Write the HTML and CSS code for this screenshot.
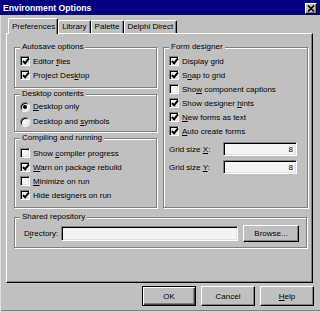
FILE: index.html
```html
<!DOCTYPE html>
<html>
    <head>
        <title> Environment Options </title>
        <link rel="stylesheet" href="styles.css">
    </head>

    <body>
        <div class="window">

            <!-- Title bar -->
            <div class="titleBar">
                <span class="titleText">Environment Options</span>
                <button class="closeButton">
                    <svg width="8" height="7" viewBox="0 0 8 7">
                        <path d="M1 0.5 L7 6.5 M7 0.5 L1 6.5" stroke="#000" stroke-width="1.6"/>
                    </svg>
                </button>
            </div>

            <!-- Tabs -->
            <div class="tabs">
                <div class="tab activeTab">Preferences</div>
                <div class="tab">Library</div>
                <div class="tab">Palette</div>
                <div class="tab">Delphi Direct</div>
            </div>

            <div class="page">
                <div class="columns">
                    <div class="leftColumn">
                        <fieldset class="group">
                            <legend>Autosave options</legend>
                            <div class="option"><span class="checkBox checked"></span><span>Editor <u>f</u>iles</span></div>
                            <div class="option"><span class="checkBox checked"></span><span>Project Des<u>k</u>top</span></div>
                        </fieldset>

                        <fieldset class="group radioGroup">
                            <legend>Desktop contents</legend>
                            <div class="option radioOption"><span class="radio selected"></span><span><u>D</u>esktop only</span></div>
                            <div class="option radioOption"><span class="radio"></span><span>Desktop and <u>s</u>ymbols</span></div>
                        </fieldset>

                        <fieldset class="group compileGroup">
                            <legend>Compiling and running</legend>
                            <div class="option"><span class="checkBox"></span><span>Show <u>c</u>ompiler progress</span></div>
                            <div class="option"><span class="checkBox checked"></span><span><u>W</u>arn on package rebuild</span></div>
                            <div class="option"><span class="checkBox"></span><span><u>M</u>inimize on run</span></div>
                            <div class="option"><span class="checkBox checked"></span><span>Hide desi<u>g</u>ners on run</span></div>
                        </fieldset>
                    </div>

                    <fieldset class="group formGroup">
                        <legend>Form designer</legend>
                        <div class="option"><span class="checkBox checked"></span><span>Display <u>g</u>rid</span></div>
                        <div class="option"><span class="checkBox checked"></span><span>S<u>n</u>ap to grid</span></div>
                        <div class="option"><span class="checkBox"></span><span>Sho<u>w</u> component captions</span></div>
                        <div class="option"><span class="checkBox checked"></span><span>Show designer <u>h</u>ints</span></div>
                        <div class="option"><span class="checkBox checked"></span><span><u>N</u>ew forms as text</span></div>
                        <div class="option"><span class="checkBox checked"></span><span><u>A</u>uto create forms</span></div>

                        <div class="gridRow">
                            <span class="gridLabel">Grid size <u>X</u>:</span>
                            <input type="text" class="field gridField" value="8">
                        </div>
                        <div class="gridRow">
                            <span class="gridLabel">Grid size <u>Y</u>:</span>
                            <input type="text" class="field gridField" value="8">
                        </div>
                    </fieldset>
                </div>

                <fieldset class="group sharedGroup">
                    <legend>Shared repository</legend>
                    <div class="directoryRow">
                        <span class="directoryLabel">D<u>i</u>rectory:</span>
                        <input type="text" class="field directoryField">
                        <button class="button browseButton">Browse...</button>
                    </div>
                </fieldset>
            </div>

            <!-- Dialog buttons -->
            <div class="dialogButtons">
                <button class="button defaultButton">OK</button>
                <button class="button">Cancel</button>
                <button class="button"><u>H</u>elp</button>
            </div>

        </div>
    </body>
</html>
```

FILE: styles.css
```css
body{
    margin: 0;
    background-color: #c0c0c0;
    font-family: "Liberation Sans", Arial, sans-serif;
    font-size: 8px;
    color: black;
}

u{
    text-underline-offset: 1px;
}

.window{
    width: 320px;
    height: 313px;
    box-sizing: border-box;
    background-color: #c0c0c0;
    box-shadow: inset 1px 0 #dfdfdf, inset 0 -2px #d4d4d4, inset 0 -3px #808080;
    overflow: hidden;
}

/* Title bar */

.titleBar{
    height: 15px;
    background-color: #000080;
    display: flex;
    align-items: center;
    justify-content: space-between;
    padding: 0 3px;
}

.titleText{
    color: white;
    font-weight: bold;
    font-size: 8.7px;
}

.closeButton{
    width: 12px;
    height: 11px;
    padding: 0;
    margin-top: 1px;
    display: flex;
    align-items: center;
    justify-content: center;
    box-sizing: border-box;
    background: #c0c0c0;
    border: 1px solid;
    border-color: #fff #000 #000 #fff;
    box-shadow: inset -1px -1px #808080;
}

/* Tabs */

.tabs{
    display: flex;
    align-items: flex-end;
    height: 15px;
    margin: 3px 0 0 8px;
}

.tab{
    height: 13px;
    box-sizing: border-box;
    padding: 0 3px;
    line-height: 12px;
    background: #c0c0c0;
    border-top: 1px solid #fff;
    border-left: 1px solid #fff;
    border-right: 1px solid #000;
    border-radius: 2px 2px 0 0;
    box-shadow: inset -1px 0 #808080;
}

.activeTab{
    height: 16px;
    line-height: 15px;
    padding: 0 2px 0 3px;
    margin-bottom: -1px;
    position: relative;
    z-index: 1;
}

/* Page */

.page{
    height: 250px;
    box-sizing: border-box;
    margin: 0 7px 0 6px;
    padding: 8px 4px 0 7px;
    border: 1px solid;
    border-color: #fff #000 #000 #fff;
    box-shadow: inset -1px -1px #808080;
}

.columns{
    display: flex;
    gap: 6px;
}

.leftColumn{
    width: 143px;
    display: flex;
    flex-direction: column;
    gap: 1px;
}

.group{
    margin: 0;
    padding: 0 4px 5px 5px;
    min-width: 0;
    border: 1px solid #808080;
    box-shadow: inset 1px 1px #fff, 1px 1px #fff;
}

.group legend{
    padding: 0 2px;
    line-height: 10px;
    height: 10px;
    background: #c0c0c0;
}

.group > .option:first-of-type{
    margin-top: 2px;
}

.radioGroup{
    padding-bottom: 2px;
}

.radioGroup > .option:first-of-type{
    margin-top: 0;
}

.compileGroup{
    flex: 1;
}

.compileGroup > .option:first-of-type{
    margin-top: 3px;
}

.formGroup{
    flex: 1;
}

.sharedGroup{
    margin-top: 4px;
    margin-right: 1px;
}

/* Check boxes and radios */

.option{
    display: flex;
    align-items: center;
    height: 14px;
    white-space: nowrap;
}

.radioOption{
    height: 15px;
}

.checkBox,
.radio{
    width: 10px;
    height: 10px;
    flex: none;
    box-sizing: border-box;
    margin-right: 3px;
    background: #f4f4f4;
    border: 1px solid;
    border-color: #808080 #fff #fff #808080;
    box-shadow: inset 1px 1px #000, inset -1px -1px #dfdfdf;
    display: flex;
    align-items: center;
    justify-content: center;
}

.checked::after{
    content: "";
    width: 2px;
    height: 5px;
    margin: -2px 0 0 1px;
    border: solid #000;
    border-width: 0 2px 2px 0;
    transform: rotate(40deg);
}

.radio{
    border-radius: 50%;
}

.selected::after{
    content: "";
    width: 4px;
    height: 4px;
    border-radius: 50%;
    background: #000;
}

/* Text fields */

.field{
    box-sizing: border-box;
    margin: 0;
    height: 14px;
    padding: 0 3px;
    font: inherit;
    text-align: right;
    background: #f4f4f4;
    border: 1px solid;
    border-color: #808080 #fff #fff #808080;
    box-shadow: inset 1px 1px #000, inset -1px -1px #dfdfdf;
    outline: none;
}

.gridRow{
    display: flex;
    align-items: center;
    margin-top: 4px;
}

.gridLabel{
    width: 54px;
    flex: none;
}

.gridField{
    width: 74px;
}

.directoryRow{
    display: flex;
    align-items: center;
    height: 17px;
    margin-top: 3px;
    padding-left: 4px;
}

.directoryLabel{
    width: 37px;
    flex: none;
}

.directoryField{
    width: 177px;
    height: 15px;
}

/* Buttons */

.button{
    box-sizing: border-box;
    margin: 0;
    padding: 0;
    font: inherit;
    color: black;
    background: #c0c0c0;
    border: 1px solid;
    border-color: #fff #000 #000 #fff;
    box-shadow: inset -1px -1px #808080;
}

.browseButton{
    width: 56px;
    height: 17px;
    margin-left: 5px;
}

.dialogButtons{
    display: flex;
    justify-content: flex-end;
    gap: 5px;
    margin-top: 3px;
    padding-right: 6px;
}

.dialogButtons .button{
    width: 54px;
    height: 20px;
}

.defaultButton{
    border-color: #000;
    box-shadow: inset 1px 1px #fff, inset -1px -1px #404040, inset -2px -2px #808080;
}
```
